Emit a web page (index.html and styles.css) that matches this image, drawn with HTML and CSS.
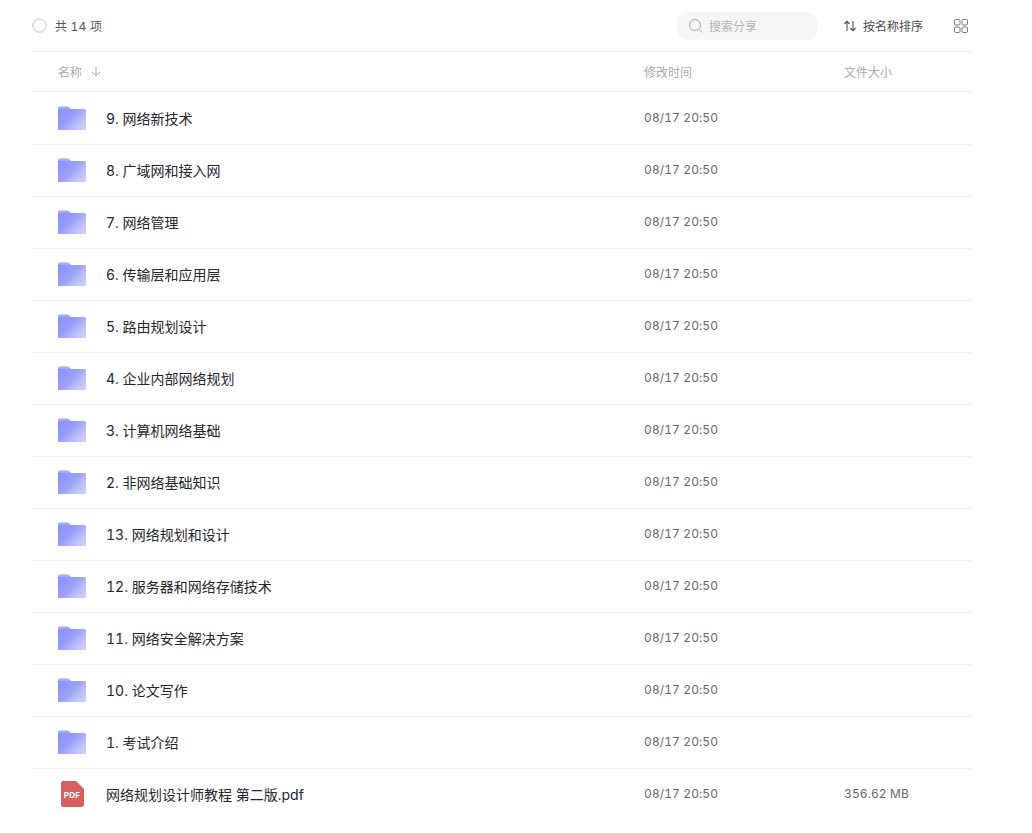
FILE: index.html
```html
<!DOCTYPE html>
<html lang="zh">
<head>
<meta charset="utf-8">
<title>共 14 项</title>
<link rel="stylesheet" href="styles.css">
</head>
<body>
<svg class="defs" width="0" height="0" aria-hidden="true">
  <defs>
    <linearGradient id="fg" x1="0" y1="0" x2="1" y2="0.7">
      <stop offset="0" stop-color="#8790f8"/>
      <stop offset="0.45" stop-color="#959df8"/>
      <stop offset="1" stop-color="#c5c9f8"/>
    </linearGradient>
    <pattern id="hatch" width="3" height="3" patternUnits="userSpaceOnUse" patternTransform="rotate(45)">
      <rect width="1.200" height="3" fill="#fff" fill-opacity="0.13"/>
    </pattern>
    <symbol id="folder" viewBox="0 0 28 24">
      <path d="M0 2a1.500 1.500 0 0 1 1.500-1.500h8.500l3 2.500H0z" fill="#a3a9f6"/>
      <path d="M0 3h26.500a1.500 1.500 0 0 1 1.500 1.500V23a1 1 0 0 1-1 1H1a1 1 0 0 1-1-1z" fill="url(#fg)"/>
      <path d="M8 24 28 5V23a1 1 0 0 1-1 1z" fill="url(#hatch)"/>
    </symbol>
  </defs>
</svg>
<main class="page">
  <header class="toolbar">
    <div class="count"><span class="check"></span><span>共 14 项</span></div>
    <div class="tools">
      <div class="search">
        <svg class="search-icon" viewBox="0 0 16 16" fill="none" stroke="#a8a8a8" stroke-width="1"><circle cx="7" cy="7" r="5.500"/><path d="M11.500 11.500l3 3"/></svg>
        <span>搜索分享</span>
      </div>
      <div class="sort">
        <svg class="sort-icon" viewBox="0 0 14 12" fill="none" stroke="#555" stroke-width="1.100"><path d="M4 11V1.500M1.300 4 4 1.300 6.700 4M10 1v9.500M7.300 8 10 10.700 12.700 8"/></svg>
        <span>按名称排序</span>
      </div>
      <svg class="grid-icon" viewBox="0 0 14 14" fill="none" stroke="#777" stroke-width="1"><rect x="0.500" y="0.500" width="5.500" height="5.500" rx="1.200"/><rect x="8" y="0.500" width="5.500" height="5.500" rx="1.200"/><rect x="0.500" y="8" width="5.500" height="5.500" rx="1.200"/><rect x="8" y="8" width="5.500" height="5.500" rx="1.200"/></svg>
    </div>
  </header>
  <div class="head row-grid">
    <div class="head-name"><span>名称</span><svg class="down" viewBox="0 0 10 11" fill="none" stroke="#a8a8a8" stroke-width="1"><path d="M5 0.500V10M1 6l4 4 4-4"/></svg></div>
    <div>修改时间</div>
    <div>文件大小</div>
  </div>
  <div class="row row-grid"><div class="name"><svg class="folder"><use href="#folder"/></svg><span>9. 网络新技术</span></div><div class="cell">08/17 20:50</div><div class="cell"></div></div>
  <div class="row row-grid"><div class="name"><svg class="folder"><use href="#folder"/></svg><span>8. 广域网和接入网</span></div><div class="cell">08/17 20:50</div><div class="cell"></div></div>
  <div class="row row-grid"><div class="name"><svg class="folder"><use href="#folder"/></svg><span>7. 网络管理</span></div><div class="cell">08/17 20:50</div><div class="cell"></div></div>
  <div class="row row-grid"><div class="name"><svg class="folder"><use href="#folder"/></svg><span>6. 传输层和应用层</span></div><div class="cell">08/17 20:50</div><div class="cell"></div></div>
  <div class="row row-grid"><div class="name"><svg class="folder"><use href="#folder"/></svg><span>5. 路由规划设计</span></div><div class="cell">08/17 20:50</div><div class="cell"></div></div>
  <div class="row row-grid"><div class="name"><svg class="folder"><use href="#folder"/></svg><span>4. 企业内部网络规划</span></div><div class="cell">08/17 20:50</div><div class="cell"></div></div>
  <div class="row row-grid"><div class="name"><svg class="folder"><use href="#folder"/></svg><span>3. 计算机网络基础</span></div><div class="cell">08/17 20:50</div><div class="cell"></div></div>
  <div class="row row-grid"><div class="name"><svg class="folder"><use href="#folder"/></svg><span>2. 非网络基础知识</span></div><div class="cell">08/17 20:50</div><div class="cell"></div></div>
  <div class="row row-grid"><div class="name"><svg class="folder"><use href="#folder"/></svg><span>13. 网络规划和设计</span></div><div class="cell">08/17 20:50</div><div class="cell"></div></div>
  <div class="row row-grid"><div class="name"><svg class="folder"><use href="#folder"/></svg><span>12. 服务器和网络存储技术</span></div><div class="cell">08/17 20:50</div><div class="cell"></div></div>
  <div class="row row-grid"><div class="name"><svg class="folder"><use href="#folder"/></svg><span>11. 网络安全解决方案</span></div><div class="cell">08/17 20:50</div><div class="cell"></div></div>
  <div class="row row-grid"><div class="name"><svg class="folder"><use href="#folder"/></svg><span>10. 论文写作</span></div><div class="cell">08/17 20:50</div><div class="cell"></div></div>
  <div class="row row-grid"><div class="name"><svg class="folder"><use href="#folder"/></svg><span>1. 考试介绍</span></div><div class="cell">08/17 20:50</div><div class="cell"></div></div>
  <div class="row row-grid"><div class="name"><span class="pdf"><svg viewBox="0 0 23 26"><path d="M2.500 0H15l8 8v15.500a2.500 2.500 0 0 1-2.500 2.500h-18A2.500 2.500 0 0 1 0 23.500v-21A2.500 2.500 0 0 1 2.500 0z" fill="#d6605f"/></svg><b>PDF</b></span><span>网络规划设计师教程 第二版.pdf</span></div><div class="cell">08/17 20:50</div><div class="cell">356.62 MB</div></div>
</main>
</body>
</html>
```
FILE: styles.css
```css
* { box-sizing: border-box; }
html, body { margin: 0; height: 100%; overflow: hidden; background: #fff; }
body { font-family: Inter, "Noto Sans CJK SC", sans-serif; color: #25262b; font-variant-numeric: tabular-nums; }
.defs { position: absolute; }
.page { width: 940px; margin-left: 32px; }
.toolbar { height: 52px; border-bottom: 1px solid #f1f1f1; display: flex; align-items: center; justify-content: space-between; }
.count { display: flex; align-items: center; gap: 8px; font-size: 12px; color: #55565a; letter-spacing: 0.2px; }
.check { width: 15px; height: 15px; border-radius: 50%; border: 2px solid #e2e2e2; }
.tools { display: flex; align-items: center; }
.search { width: 140px; height: 28px; border-radius: 10px; background: #f6f6f6; display: flex; align-items: center; padding-left: 11px; gap: 5px; font-size: 12px; color: #b5b5b5; }
.search-icon { width: 16px; height: 16px; }
.sort { display: flex; align-items: center; gap: 6px; margin-left: 26px; font-size: 12px; color: #4b4c50; }
.sort-icon { width: 14px; height: 12px; }
.grid-icon { width: 14px; height: 14px; margin-left: 31px; margin-right: 4px; }
.row-grid { display: grid; grid-template-columns: 612px 200px 1fr; align-items: center; }
.head { height: 40px; border-bottom: 1px solid #f1f1f1; font-size: 12px; color: #a9a9a9; padding-bottom: 1px; }
.head-name { display: flex; align-items: center; gap: 9px; padding-left: 26px; }
.down { width: 10px; height: 11px; }
.row { height: 52px; font-size: 12px; letter-spacing: 0.1px; color: #66676b; }
.row + .row { border-top: 1px solid #f3f3f3; padding-bottom: 1px; }
.cell { padding-bottom: 1px; }
.name { display: flex; align-items: center; padding-left: 26px; font-size: 14px; letter-spacing: 0; color: #25262b; gap: 20px; }
.folder { width: 28px; height: 24px; flex: none; }
.pdf { position: relative; width: 28px; height: 26px; flex: none; display: flex; justify-content: center; }
.pdf svg { width: 23px; height: 26px; }
.pdf b { position: absolute; left: 0; right: 0; top: 9px; text-align: center; font: 700 8px/11px Inter, sans-serif; letter-spacing: 0.2px; color: #fff; }
```
